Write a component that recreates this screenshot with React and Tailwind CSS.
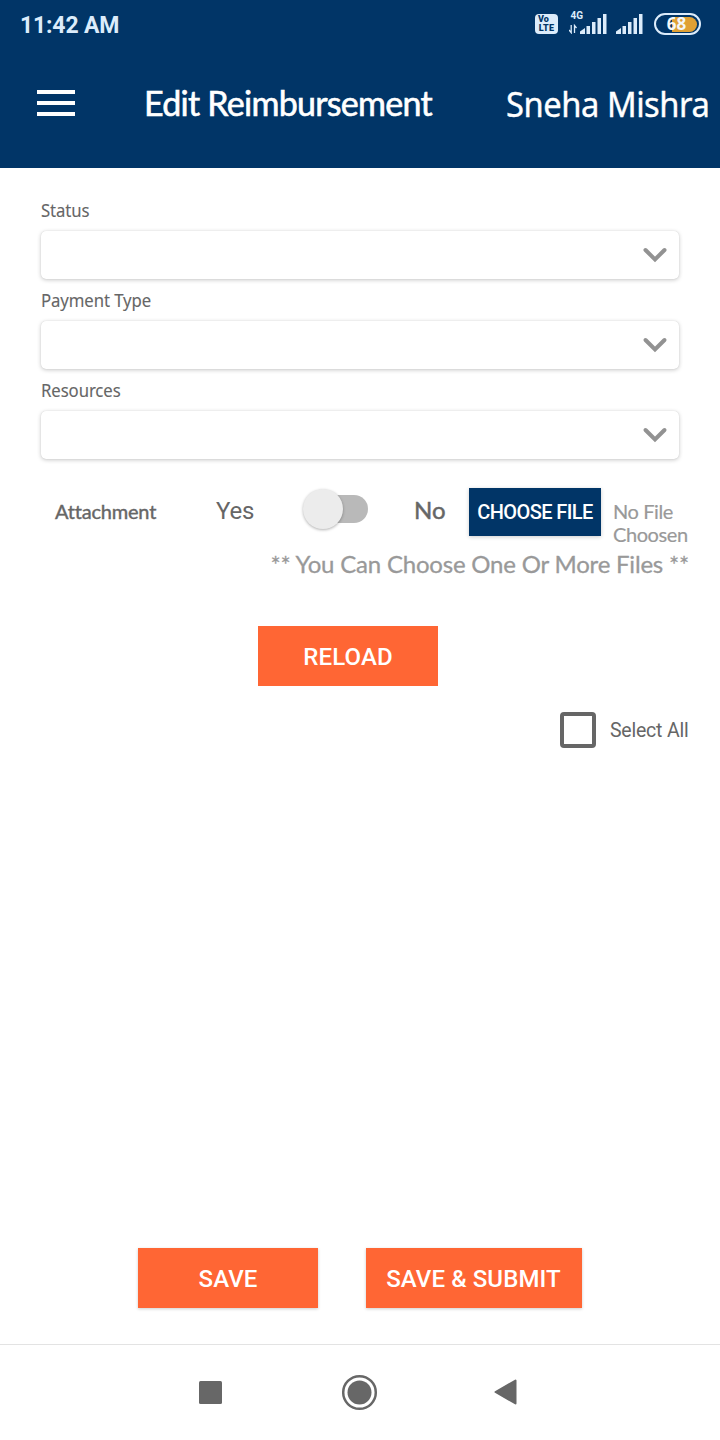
import React from "react";

const fields = ["Status", "Payment Type", "Resources"];

function SignalBars() {
  return (
    <svg width="28" height="20" viewBox="0 0 28 20" fill="#dcecfb">
      <path d="M0 20v-2.500l5-3.500v6z" />
      <rect x="6.500" y="12" width="3.500" height="8" />
      <rect x="12" y="8" width="3.500" height="12" />
      <rect x="17.500" y="4" width="3.500" height="16" />
      <rect x="23" y="0" width="3.500" height="20" />
    </svg>
  );
}

function StatusBar() {
  return (
    <div className="flex h-12 items-start pl-[20px] pr-[19px] text-[#dcecfb]">
      <span className="mt-[12px] font-[Roboto,sans-serif] text-[23px] leading-7 font-bold tracking-[-0.17px]">11:42 AM</span>
      <div className="ml-auto mt-[14px] flex h-5 w-[23px] flex-col items-center rounded-[4px] bg-[#dcecfb] pt-px font-[Roboto,sans-serif] text-[9px] leading-[9px] font-black text-[#013567]">
        <span className="h-[9px] self-start pl-[3px]">Vo</span>
        <span className="h-[9px] tracking-[0.2px]">LTE</span>
      </div>
      <div className="ml-[11px] mt-[10px] flex h-6 w-[38px]">
        <div className="flex w-[10.500px] shrink-0 flex-col">
          <span className="-mt-px ml-[1.500px] font-[Roboto,sans-serif] text-[10px] leading-[14px] font-bold">4G</span>
          <svg className="mt-px" width="10" height="10" viewBox="0 0 10 10" fill="none" stroke="#dcecfb" strokeWidth="1.300">
            <path d="M0 6l2.200 2.700V1M5.500 9V1.500L7.500 4" />
          </svg>
        </div>
        <div className="mt-[4px]"><SignalBars /></div>
      </div>
      <div className="ml-[9px] mt-[14px]"><SignalBars /></div>
      <div className="ml-[10px] mt-[13px] flex h-[22px] w-[47px] items-center justify-center rounded-full border-2 border-[#dcecfb]">
        <div className="flex h-[15px] w-[38px] items-center justify-center rounded-full bg-[linear-gradient(90deg,transparent_13px,#e0a034_13px)] pr-[2px] font-['Noto_Sans',sans-serif] text-[17px] font-bold text-[#f4f7fa]">68</div>
      </div>
    </div>
  );
}

function Field({ label }) {
  return (
    <div className="flex h-[90px] flex-col">
      <span className="ml-px h-[31px] w-fit origin-left scale-x-[0.93] font-['Noto_Sans',sans-serif] text-[18px] leading-[21px] tracking-[-0.1px] text-[#666] [-webkit-text-stroke:0.1px_#666]">{label}</span>
      <div className="mx-px flex h-12 items-center justify-end rounded-[5px] bg-white pr-[11px] shadow-[0_1px_4px_rgba(0,0,0,0.22),0_0_1px_rgba(0,0,0,0.15)]">
        <svg width="26" height="18" viewBox="0 0 26 18" fill="none" stroke="#929292" strokeWidth="4" strokeLinecap="round">
          <path d="M3.500 4l9.500 9.500 9.500-9.500" />
        </svg>
      </div>
    </div>
  );
}

export default function App() {
  return (
    <div className="flex h-[1440px] w-[720px] flex-col overflow-hidden bg-white font-[Lato,sans-serif] text-[#666]">
      <header className="h-[168px] bg-[#013567]">
        <StatusBar />
        <div className="flex h-28 items-center whitespace-nowrap text-white">
          <div className="ml-[37px] flex w-[38px] shrink-0 flex-col gap-[7px] pb-[2px]">
            <div className="h-1 bg-white" />
            <div className="h-1 bg-white" />
            <div className="h-1 bg-white" />
          </div>
          <h1 className="-mt-[2px] ml-[69px] w-[362px] shrink-0 text-[34px] leading-10 tracking-[-0.73px] [-webkit-text-stroke:0.6px_white]">Edit Reimbursement</h1>
          <span className="shrink-0 origin-left scale-x-[0.935] font-['Noto_Sans',sans-serif] text-[35px] leading-10 tracking-[-0.5px] [-webkit-text-stroke:0.4px_white]">Sneha Mishra</span>
        </div>
      </header>

      <section className="mx-10 mt-8 h-[288px]">
        {fields.map((label) => <Field key={label} label={label} />)}
      </section>

      <div className="flex h-[60px] whitespace-nowrap pl-[55px]">
        <span className="mt-[11px] w-[161px] text-[20px] leading-6 tracking-[-0.2px] [-webkit-text-stroke:0.4px_#666]">Attachment</span>
        <span className="mt-[9px] w-[87px] font-[Roboto,sans-serif] text-[24px] leading-7 tracking-[-0.2px]">Yes</span>
        <div className="mt-px flex h-10 w-[65px] items-center rounded-full">
          <div className="z-10 size-10 shrink-0 rounded-full bg-[#ececec] shadow-[0_1px_3px_rgba(0,0,0,0.3)]" />
          <div className="-ml-5 h-7 w-[45px] rounded-r-full bg-[#b9b9b9]" />
        </div>
        <span className="ml-[46px] mt-2 w-[55px] text-[24px] leading-7 [-webkit-text-stroke:0.5px_#666]">No</span>
        <button className="h-12 w-[132px] bg-[#013567] font-[Roboto,sans-serif] text-[20px] leading-6 font-medium tracking-[-0.6px] text-white shadow-[0_1px_4px_rgba(0,0,0,0.2)]">CHOOSE FILE</button>
        <div className="ml-3 mt-3 text-[20px] leading-[23px] tracking-[-0.42px] text-[#999] [-webkit-text-stroke:0.2px_#999]">No File<br />Choosen</div>
      </div>
      <p className="h-[78px] pr-[31px] text-right text-[24px] leading-8 tracking-[-0.2px] whitespace-nowrap text-[#999] [-webkit-text-stroke:0.3px_#999]">** You Can Choose One Or More Files **</p>

      <button className="ml-[258px] h-[60px] w-[180px] shrink-0 bg-[#ff6634] pt-[2px] font-[Roboto,sans-serif] text-[24px] font-medium tracking-[0.1px] text-white">RELOAD</button>

      <div className="mt-[26px] flex h-9 items-center pl-[560px]">
        <div className="size-9 rounded-[4px] border-4 border-[#666]" />
        <span className="ml-[14px] mt-[2px] font-[Roboto,sans-serif] text-[19.500px] tracking-[-0.22px] whitespace-nowrap">Select All</span>
      </div>

      <div className="mt-auto flex h-24 gap-12 pl-[138px] font-[Roboto,sans-serif] text-[24px] font-medium tracking-[0.1px] text-white">
        <button className="h-[60px] w-[180px] bg-[#ff6634] pt-[2px] shadow-[0_1px_3px_rgba(0,0,0,0.2)]">SAVE</button>
        <button className="h-[60px] w-[216px] bg-[#ff6634] pt-[2px] pr-px whitespace-nowrap shadow-[0_1px_3px_rgba(0,0,0,0.2)]">SAVE &amp; SUBMIT</button>
      </div>

      <nav className="flex h-24 items-center border-t border-[#e3e3e3] pl-[198.500px]">
        <div className="-mt-px size-[23px] rounded-[1.500px] bg-[#676767]" />
        <svg className="ml-[119.500px] -mt-px" width="37" height="37" viewBox="0 0 37 37">
          <circle cx="18.500" cy="18.500" r="16.300" fill="none" stroke="#676767" strokeWidth="2.500" />
          <circle cx="18.500" cy="18.500" r="12" fill="#676767" />
        </svg>
        <svg className="ml-[115px] -mt-px" width="26" height="28" viewBox="0 0 26 28">
          <path d="M2.500 14L22.500 2.500v23z" fill="#676767" stroke="#676767" strokeWidth="2" strokeLinejoin="round" />
        </svg>
      </nav>
    </div>
  );
}
